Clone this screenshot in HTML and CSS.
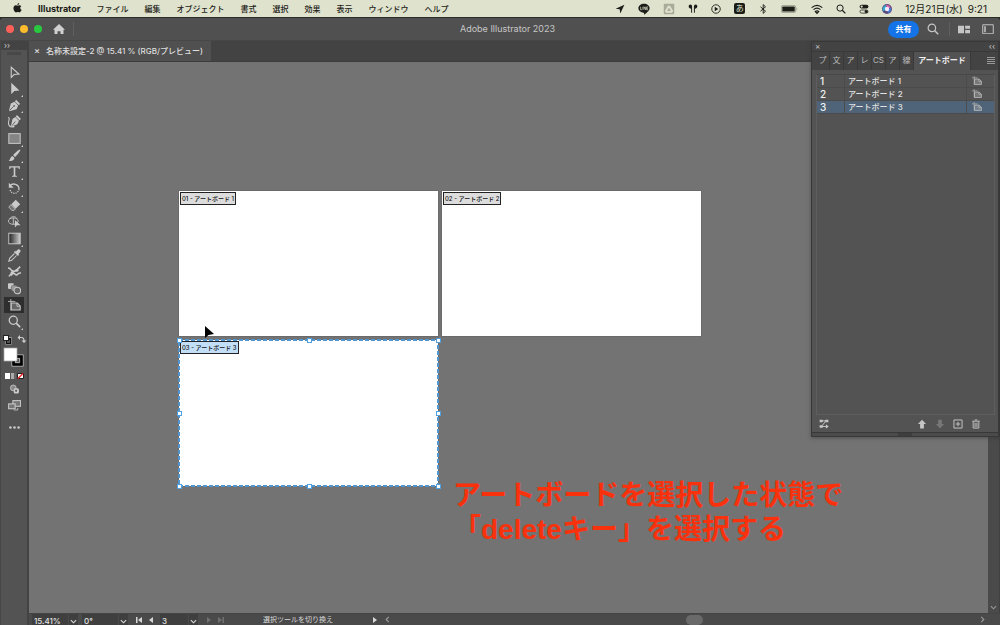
FILE: index.html
```html
<!DOCTYPE html>
<html lang="ja">
<head>
<meta charset="utf-8">
<meta name="viewport" content="width=device-width, initial-scale=1">
<title>Adobe Illustrator 2023</title>
<link rel="stylesheet" href="styles.css">
</head>
<body>
<svg class="defs" aria-hidden="true">
  <symbol id="artboard" viewBox="0 0 16 16"><path d="M3.500 0v14M0 3h9" fill="none" stroke="currentColor"/><path d="M4 5h7.500l3.500 3.500V13.500H4z" fill="currentColor" fill-opacity=".35" stroke="currentColor" stroke-width="1.300"/><path d="M11 5v4h4" fill="none" stroke="currentColor"/></symbol>
  <symbol id="chev" viewBox="0 0 8 8"><path d="M1 2.500l3 3 3-3" fill="none" stroke="currentColor" stroke-width="1.300"/></symbol>
  <symbol id="search" viewBox="0 0 16 16"><circle cx="6.500" cy="6.500" r="5" fill="none" stroke="currentColor" stroke-width="1.600"/><path d="M10 10l5 5" stroke="currentColor" stroke-width="2"/></symbol>
</svg>

<header class="menubar">
  <nav class="menus">
    <button class="menu apple" aria-label="Apple"><svg viewBox="0 0 16 18"><path d="M11 0c.2 2-1.600 4-3.300 4C7.500 2.200 9.200.3 11 0zM8 5c.8 0 2-1 3.600-1 1.200 0 2.400.6 3.100 1.700-2.800 1.600-2.300 5.400.5 6.500-.7 2-2.200 4.600-3.800 4.600-1.200 0-1.600-.7-3-.7s-1.900.7-3 .7C3.200 16.800.8 13 .8 9.500.8 6 3 4.200 5.100 4.200 6.500 4.200 7.300 5 8 5z" fill="currentColor"/></svg></button>
    <button class="menu appname">Illustrator</button>
    <button class="menu">ファイル</button>
    <button class="menu">編集</button>
    <button class="menu">オブジェクト</button>
    <button class="menu">書式</button>
    <button class="menu">選択</button>
    <button class="menu">効果</button>
    <button class="menu">表示</button>
    <button class="menu">ウィンドウ</button>
    <button class="menu">ヘルプ</button>
  </nav>
  <div class="tray">
    <svg viewBox="0 0 16 16"><path d="M15 1L1 7.500l6.500 1L8.500 15z" fill="currentColor"/></svg>
    <svg class="big" viewBox="0 0 16 16"><path d="M8 1c4 0 7.500 2.500 7.500 6 0 3-3.500 6-7.500 8.500.3-1.500 0-2.400-.5-2.500C3.500 12.600.5 10.200.5 7c0-3.500 3.500-6 7.500-6z" fill="currentColor"/><path d="M3.500 5v4h1.800M6.500 5v4M8 9V5l2.200 4V5M13.500 5.200h-2V9h2M11.500 7h1.800" fill="none" stroke="#dfe1cc" stroke-width=".9"/></svg>
    <svg class="big" viewBox="0 0 16 16"><rect x="1" y="1" width="14" height="14" rx="1" fill="#a9ab9a"/><path d="M6.500 3.500h3l4 7-1.500 2.500H4L2.500 10.500zM8 6l-2.500 4.500h5z" fill="#dfe1cc" fill-rule="evenodd"/></svg>
    <svg viewBox="0 0 16 16"><path d="M1 3.500a2.500 2.500 0 0 1 5.500 0V14H5V7.500C3 7 1 6 1 3.500zM15 3.500a2.500 2.500 0 0 0-5.500 0V14H11V7.500c2-.5 4-1.500 4-4z" fill="currentColor"/></svg>
    <svg viewBox="0 0 16 16"><circle cx="8" cy="8" r="6.800" fill="none" stroke="currentColor" stroke-width="1.400"/><path d="M6 4.500v7L11.500 8z" fill="currentColor"/></svg>
    <span class="ime">あ</span>
    <svg viewBox="0 0 16 16"><path d="M4 4.500l8 7L8.300 15V1L12 4.500l-8 7" fill="none" stroke="currentColor" stroke-width="1.500"/></svg>
    <svg class="battery" viewBox="0 0 26 12"><rect x=".5" y=".5" width="22" height="11" rx="3" fill="none" stroke="currentColor" stroke-opacity=".5"/><rect x="2" y="2" width="19" height="8" rx="1.500" fill="currentColor"/><path d="M24 4q2 2 0 4z" fill="currentColor" fill-opacity=".5"/></svg>
    <svg class="big" viewBox="0 0 18 16"><path d="M1 6q8-7 16 0M3.800 9q5.200-4.500 10.400 0M6.500 11.800q2.500-2 5 0L9 14.500z" fill="none" stroke="currentColor" stroke-width="1.800"/></svg>
    <svg viewBox="0 0 16 16"><use href="#search"/></svg>
    <svg viewBox="0 0 16 16"><rect x="1" y="1" width="14" height="6" rx="3" fill="currentColor"/><circle cx="4.300" cy="4" r="1.800" fill="#dfe1cc"/><rect x="1.600" y="9.600" width="12.800" height="5" rx="2.500" fill="none" stroke="currentColor" stroke-width="1.200"/><circle cx="11.500" cy="12" r="2.500" fill="currentColor"/></svg>
    <svg viewBox="0 0 16 16"><circle cx="8" cy="8" r="8" fill="#5a4a80"/><path d="M2 12A7 7 0 0 1 6 1.500L7 7z" fill="#35a9c9"/><path d="M6 1.500a7 7 0 0 1 8 4L9 7z" fill="#d861a8"/><path d="M14.500 6a7 7 0 0 1-5 8.500L9 9z" fill="#4a7de0"/><circle cx="8" cy="8" r="3.500" fill="#eef"/></svg>
    <time class="clock">12月21日(水)&ensp;9:21</time>
  </div>
</header>

<div class="app">
  <header class="appbar">
    <div class="side">
      <button class="light red" aria-label="閉じる"></button>
      <button class="light yellow" aria-label="しまう"></button>
      <button class="light green" aria-label="拡大"></button>
      <button class="home" aria-label="ホーム"><svg viewBox="0 0 16 14"><path d="M8 0l8 7.500h-2V14h-4V9.500H6V14H2V7.500H0z" fill="currentColor"/></svg></button>
      <i class="rule"></i>
    </div>
    <h1 class="title">Adobe Illustrator 2023</h1>
    <div class="side end">
      <button class="share">共有</button>
      <button class="iconbtn" aria-label="検索"><svg viewBox="0 0 16 16"><use href="#search"/></svg></button>
      <i class="rule"></i>
      <button class="iconbtn" aria-label="レイアウト"><svg viewBox="0 0 16 12"><path d="M0 1h8v10H0zM9.500 1H16v4H9.500zM9.500 6.500H16V11H9.500z" fill="currentColor"/></svg></button>
      <button class="iconbtn" aria-label="ワークスペース"><svg viewBox="0 0 16 14"><path d="M1 1h14v12H1z" fill="none" stroke="currentColor" stroke-width="1.300"/><path d="M3 3h2v8H3z" fill="currentColor"/></svg></button>
    </div>
  </header>

  <div class="body">
    <aside class="toolbar">
      <button class="expand" aria-label="展開">››</button>
      <i class="grip"></i>
      <div class="tools">
        <button class="tool" aria-label="選択"><svg viewBox="0 0 16 16"><path d="M4 1.500v12.500l3.500-3.500 6-.5z" fill="none" stroke="currentColor" stroke-width="1.400"/></svg></button>
        <button class="tool more" aria-label="ダイレクト選択"><svg viewBox="0 0 16 16"><path d="M4 1v14l3.800-4 6.200-.5z" fill="currentColor"/></svg></button>
        <button class="tool more" aria-label="ペン"><svg viewBox="0 0 16 16"><path d="M10 1l5 5-2 1.500L8.500 3zM8 3.500L12.500 8l-2 4.500L2 15l-.8-.8L3.500 5.500z" fill="currentColor"/><path d="M2 14l5-5" stroke="#535353"/><circle cx="7.500" cy="8.500" r="1" fill="#535353"/></svg></button>
        <button class="tool" aria-label="曲線"><svg viewBox="0 0 16 16"><path d="M11 0l5 5-2 1.500L9.500 2zM9 2.500L13.500 7l-2 4.500L4.500 14l-.8-.8L5.500 5z" fill="currentColor"/><path d="M0 3c4 1-1 5 1 9 1 3 4 3 7 2" fill="none" stroke="currentColor" stroke-width="1.300"/><path d="M5 13l4-5" stroke="#535353"/></svg></button>
        <button class="tool more" aria-label="長方形"><svg viewBox="0 0 16 16"><rect x="1" y="2" width="14" height="12" fill="#858585" stroke="currentColor" stroke-width="1.200"/></svg></button>
        <button class="tool more" aria-label="ブラシ"><svg viewBox="0 0 16 16"><path d="M15 .8c1 1-4.500 7.500-6.500 9L6.300 7.700C8 5.500 14 0 15 .8zM5.500 8.500L8 11c-.5 3-4 4-7.500 3.800C3 13.500 2.500 9.500 5.500 8.500z" fill="currentColor"/></svg></button>
        <button class="tool more" aria-label="文字"><svg viewBox="0 0 16 16"><path d="M1.500 1.500h13V5h-1.200l-.6-1.800H9V13l2 .5v1H5v-1l2-.5V3.200H3.300L2.700 5H1.500z" fill="currentColor"/></svg></button>
        <button class="tool more" aria-label="回転"><svg viewBox="0 0 16 16"><path d="M2.500 4.500C6 .5 13.500 3 13.500 8.500" fill="none" stroke="currentColor" stroke-width="1.600"/><path d="M13.500 8.500C13 15 4 16 2.500 9.500" fill="none" stroke="currentColor" stroke-width="1.500" stroke-dasharray="1.500 1.300"/><path d="M1 1v6h6z" fill="currentColor"/></svg></button>
        <button class="tool more" aria-label="消しゴム"><svg viewBox="0 0 16 16"><path d="M9.500 1L15 6.500 9.300 12 4 6.500z" fill="currentColor"/><path d="M3.500 7L9 12.500 7.500 14H4.800L1 10z" fill="#737373" stroke="currentColor"/></svg></button>
        <button class="tool" aria-label="シェイプ形成"><svg viewBox="0 0 16 16"><ellipse cx="6.500" cy="7.500" rx="6" ry="4" fill="none" stroke="currentColor" stroke-width="1.100"/><path d="M2 5c2-4 8-4 9 0M6.500 3.500v8" fill="none" stroke="currentColor" stroke-width="1.100"/><path d="M8.500 6v9.500l2.500-3h4.500z" fill="currentColor"/></svg></button>
        <button class="tool more" aria-label="グラデーション"><svg viewBox="0 0 16 16"><defs><linearGradient id="g"><stop stop-color="#222"/><stop offset="1" stop-color="#ccc"/></linearGradient></defs><rect x="1" y="1.500" width="14" height="13" fill="url(#g)" stroke="currentColor" stroke-width="1.200"/></svg></button>
        <button class="tool" aria-label="スポイト"><svg viewBox="0 0 16 16"><path d="M9.500 3L12 .8c2-1.300 4.500 1 3 3L13 6.300l.8.900-1.500 1.500-5-5L8.700 2.300z" fill="currentColor"/><path d="M8 5.500l-6 6L1 15l3.500-1 6-6" fill="none" stroke="currentColor" stroke-width="1.300"/></svg></button>
        <button class="tool" aria-label="パペットワープ"><svg viewBox="0 0 16 16"><path d="M0 4c3-1 3 2 5 3s4 1 6-1l4-4M1 14c2-1 2-4 5-4s3 3 5 2 2-3 5-2M7 7L4 13" fill="none" stroke="currentColor" stroke-width="1.900"/><circle cx="5" cy="9.500" r="1.900" fill="currentColor"/><circle cx="11" cy="6.500" r="1.900" fill="currentColor"/></svg></button>
        <button class="tool" aria-label="ブレンド"><svg viewBox="0 0 16 16"><rect x="0" y="1.500" width="7" height="7" rx="1" fill="currentColor"/><rect x="4" y="4" width="7.500" height="7.500" rx="2.500" fill="#999" stroke="#535353" stroke-width=".6"/><circle cx="11.500" cy="10.500" r="4" fill="#666" stroke="currentColor" stroke-width="1.300"/></svg></button>
        <button class="tool current" aria-label="アートボード" aria-pressed="true"><svg viewBox="0 0 16 16"><use href="#artboard"/></svg></button>
        <button class="tool more" aria-label="ズーム"><svg viewBox="0 0 16 16"><use href="#search"/></svg></button>
      </div>
      <svg class="colors" viewBox="0 0 26 48" role="img" aria-label="塗りと線">
        <path d="M5 6h5v5H5z" fill="none" stroke="#111" stroke-width="2"/><path d="M4.500 4.500h6v7h-6z" fill="none" stroke="#ccc" stroke-width=".6"/><rect x="2.500" y="2.500" width="5" height="5" fill="#fff" stroke="#222"/>
        <path d="M18 4.500h2.500q2.500 0 2.500 3.500" fill="none" stroke="#ccc" stroke-width="1.200"/><path d="M19 2v5l-2.500-2.500zM20.500 7.500h5L23 10z" fill="#ccc"/>
        <rect x="11" y="22" width="11" height="11" fill="#535353" stroke="#ccc"/><rect x="12.500" y="23.500" width="8" height="8" fill="none" stroke="#000" stroke-width="2.500"/><rect x="14.500" y="25.500" width="4" height="4" fill="#535353" stroke="#ccc" stroke-width=".7"/>
        <rect x="3" y="15" width="13" height="13" fill="#fff" stroke="#aaa" stroke-width=".7"/>
        <path d="M4 40h5v6H4z" fill="#fff"/><path d="M10 40h3v6h-3z" fill="#aaa"/><path d="M13 40h2v6h-2z" fill="#666"/><path d="M16.500 40.500h6v5h-6z" fill="#fff" stroke="#222"/><path d="M17 45.500l5-5" stroke="#e22" stroke-width="1.500"/>
      </svg>
      <button class="tool" aria-label="描画モード"><svg viewBox="0 0 16 16"><circle cx="6.500" cy="6" r="3.500" fill="#888" stroke="currentColor"/><rect x="7" y="6.500" width="6.500" height="6.500" rx="2" fill="currentColor"/><circle cx="10" cy="9.500" r="1.300" fill="#535353"/></svg></button>
      <button class="tool" aria-label="スクリーンモード"><svg viewBox="0 0 16 16"><rect x="6" y="2" width="9.500" height="7" fill="#777" stroke="currentColor" stroke-width="1.300"/><rect x=".8" y="6" width="8" height="6" fill="#777" stroke="currentColor" stroke-width="1.300"/><path d="M7 13.500h5V11" fill="none" stroke="currentColor"/></svg></button>
      <button class="tool dots" aria-label="ツールバーを編集"><svg viewBox="0 0 16 16"><g fill="currentColor"><circle cx="3" cy="8" r="1.600"/><circle cx="8" cy="8" r="1.600"/><circle cx="13" cy="8" r="1.600"/></g></svg></button>
    </aside>

    <main class="workspace">
      <div class="doctabs">
        <div class="doctab"><button class="close" aria-label="閉じる">×</button><span>名称未設定-2 @ 15.41 % (RGB/プレビュー)</span></div>
      </div>
      <div class="stage">
        <div class="canvas">
          <section class="board one"><span class="tag">01 - アートボード 1</span></section>
          <section class="board two"><span class="tag">02 - アートボード 2</span></section>
          <section class="board three"><span class="tag">03 - アートボード 3</span>
            <svg class="selection"><rect width="100%" height="100%"/></svg>
            <i class="handle nw"></i><i class="handle n"></i><i class="handle ne"></i><i class="handle w"></i><i class="handle e"></i><i class="handle sw"></i><i class="handle s"></i><i class="handle se"></i>
          </section>
          <svg class="pointer" viewBox="0 0 10 14"><path d="M1 0v12l3.500-3L10 8z" fill="#000"/></svg>
          <p class="note">アートボードを選択した状態で<br>「deleteキー」を選択する</p>
        </div>
        <div class="vscroll"><svg viewBox="0 0 8 8"><use href="#chev"/></svg></div>
      </div>
      <footer class="status">
        <input class="field zoom" aria-label="ズーム" value="15.41%"><button class="drop" aria-label="ズーム一覧"><svg viewBox="0 0 8 8"><use href="#chev"/></svg></button>
        <input class="field angle" aria-label="回転" value="0°"><button class="drop" aria-label="角度一覧"><svg viewBox="0 0 8 8"><use href="#chev"/></svg></button>
        <button class="step" aria-label="最初"><svg viewBox="0 0 8 8"><path d="M1 1h1.500v6H1zM7 1v6L3 4z" fill="currentColor"/></svg></button>
        <button class="step" aria-label="前へ"><svg viewBox="0 0 8 8"><path d="M6 1v6L2 4z" fill="currentColor"/></svg></button>
        <input class="field page" aria-label="アートボード番号" value="3"><button class="drop" aria-label="アートボード一覧"><svg viewBox="0 0 8 8"><use href="#chev"/></svg></button>
        <button class="step" disabled aria-label="次へ"><svg viewBox="0 0 8 8"><path d="M2 1v6l4-3z" fill="currentColor"/></svg></button>
        <button class="step" disabled aria-label="最後"><svg viewBox="0 0 8 8"><path d="M5.500 1H7v6H5.500zM1 1v6l4-3z" fill="currentColor"/></svg></button>
        <span class="hint">選択ツールを切り換え</span>
        <button class="step" aria-label="表示メニュー"><svg viewBox="0 0 8 8"><path d="M2 1v6l4-3z" fill="currentColor"/></svg></button>
        <div class="hscroll"><svg class="left" viewBox="0 0 8 8"><use href="#chev"/></svg><i class="thumb"></i><svg class="right" viewBox="0 0 8 8"><use href="#chev"/></svg></div>
      </footer>
    </main>

    <aside class="panel">
      <div class="panelhead"><button aria-label="パネルを閉じる">×</button><button aria-label="折りたたむ">‹‹</button></div>
      <div class="paneltabs">
        <button class="ptab">プ</button><button class="ptab">文</button><button class="ptab">ア</button><button class="ptab">レ</button><button class="ptab">CS</button><button class="ptab">ア</button><button class="ptab">線</button><button class="ptab active">アートボード</button>
        <button class="pmenu" aria-label="パネルメニュー"><svg viewBox="0 0 8 8"><path d="M0 1.500h8M0 3.500h8M0 5.500h8M0 7.500h8" stroke="currentColor" stroke-width=".7"/></svg></button>
      </div>
      <div class="list">
        <table class="boards">
          <tr><td class="num">1</td><td class="name">アートボード 1</td><td class="ico"><svg viewBox="0 0 16 16"><use href="#artboard"/></svg></td></tr>
          <tr><td class="num">2</td><td class="name">アートボード 2</td><td class="ico"><svg viewBox="0 0 16 16"><use href="#artboard"/></svg></td></tr>
          <tr class="selected"><td class="num">3</td><td class="name">アートボード 3</td><td class="ico"><svg viewBox="0 0 16 16"><use href="#artboard"/></svg></td></tr>
        </table>
      </div>
      <div class="panelfoot">
        <button class="arrange" aria-label="再配置"><svg viewBox="0 0 16 16"><path d="M1 1h5v4H1zM10 1h5v4h-5zM1 10h5v4H1z" fill="currentColor"/><path d="M5 3h6L4 12h8" fill="none" stroke="currentColor" stroke-width="1.500"/><path d="M11 8.500v7l4.500-3.500z" fill="currentColor"/></svg></button>
        <button aria-label="上へ"><svg viewBox="0 0 16 16"><path d="M8 1l6.500 7H11v7H5V8H1.500z" fill="currentColor"/></svg></button>
        <button disabled aria-label="下へ"><svg viewBox="0 0 16 16"><path d="M8 15l6.500-7H11V1H5v7H1.500z" fill="currentColor"/></svg></button>
        <button aria-label="新規"><svg viewBox="0 0 16 16"><path d="M1.500 1.500h13v13h-13zM8 4.500v7M4.500 8h7" fill="none" stroke="currentColor" stroke-width="1.500"/></svg></button>
        <button aria-label="削除"><svg viewBox="0 0 16 16"><path d="M6 1.500h4M2 3.500h12M3.500 4v10.500h9V4M6.500 6v7M9.500 6v7" fill="none" stroke="currentColor" stroke-width="1.500"/></svg></button>
      </div>
      <div class="resize"><i></i></div>
    </aside>
  </div>
</div>
</body>
</html>
```

FILE: styles.css
```css
* { box-sizing: border-box; }
body {
  margin: 0;
  height: 100vh;
  display: flex;
  flex-direction: column;
  overflow: hidden;
  background: #2c2d29;
  color: #d8d8d8;
  font: 8px/12px Inter, "Noto Sans CJK JP", sans-serif;
}
button, input { font: inherit; color: inherit; background: none; border: 0; padding: 0; margin: 0; }
svg { display: block; }
.defs { position: absolute; width: 0; height: 0; }

.menubar {
  flex: none;
  height: 17px;
  display: flex;
  align-items: center;
  justify-content: space-between;
  padding: 0 13px;
  background: #dfe2cd;
  color: #1c1c18;
}
.menus { display: flex; align-items: center; gap: 16px; white-space: nowrap; font-weight: 500; }
.apple { width: 9px; }
.appname { font-size: 9px; font-weight: 700; }
.tray { display: flex; align-items: center; gap: 13px; }
.tray svg { width: 10px; height: 10px; }
.tray .big { width: 12px; height: 12px; }
.tray .battery { width: 17px; height: 8px; }
.ime { width: 11px; height: 11px; border-radius: 2px; background: #1c1c18; color: #dfe2cd; line-height: 11px; text-align: center; }
.clock { font-size: 10px; white-space: nowrap; }

.app { flex: 1; min-height: 0; display: flex; flex-direction: column; margin-top: 1px; border-radius: 4px 4px 0 0; overflow: hidden; background: #535353; }
.appbar { flex: none; height: 23px; display: flex; align-items: center; padding: 0 6px; background: #505050; border-bottom: 1px solid #474747; }
.side { flex: 1; display: flex; align-items: center; gap: 6px; }
.side.end { justify-content: flex-end; gap: 8px; }
.light { width: 8px; height: 8px; border-radius: 50%; }
.red { background: #fe5f57; }
.yellow { background: #febc2e; }
.green { background: #28c840; }
.home { width: 12px; margin-left: 5px; color: #d0d0d0; }
.rule { width: 1px; height: 14px; background: #606060; margin-left: 2px; }
.title { margin: 0 0 0 15px; font-size: 9px; line-height: 12px; font-weight: 400; color: #c6c6c6; }
.share { width: 31px; height: 17px; border-radius: 9px; background: #1473e6; color: #fff; font-weight: 700; }
.iconbtn { width: 12px; color: #c6c6c6; }
.iconbtn + .iconbtn { margin-left: 4px; }

.body { position: relative; flex: 1; min-height: 0; display: flex; }
.toolbar { flex: none; width: 29px; display: flex; flex-direction: column; align-items: center; background: #535353; border-left: 1px solid #474747; border-right: 2px solid #434343; color: #cacaca; }
.expand { align-self: stretch; flex: none; height: 9px; padding-left: 3px; background: #434343; text-align: left; line-height: 7px; }
.grip { flex: none; width: 14px; height: 3px; margin: 2px 0; background: #484848; }
.tools { flex: none; height: 266px; margin-top: 7px; display: flex; flex-direction: column; justify-content: space-between; }
.tool { position: relative; flex: none; width: 20px; height: 16px; display: grid; place-items: center; }
.tool svg { width: 13px; height: 13px; }
.tool.current { background: #2e2e2e; }
.more::after { content: ""; position: absolute; right: 1px; bottom: 0; border: 1px solid transparent; border-right-color: #ccc; border-bottom-color: #ccc; }
.colors { flex: none; width: 26px; height: 48px; margin: 3px 0 0; }
.dots { margin-top: 6px; }

.workspace { flex: 1; min-width: 0; display: flex; flex-direction: column; }
.doctabs { flex: none; height: 21px; display: flex; background: #434343; border-bottom: 1px solid #3c3c3c; }
.doctab { display: flex; align-items: center; gap: 6px; padding: 0 8px 0 5px; background: #505050; color: #dedede; white-space: nowrap; font-weight: 500; }
.close { width: 6px; font-size: 9px; }
.stage { flex: 1; min-height: 0; display: flex; }
.canvas { position: relative; flex: 1; overflow: hidden; background: #737373; }
.vscroll { flex: none; width: 12px; display: flex; align-items: flex-end; justify-content: center; padding-bottom: 2px; background: #4a4a4a; border-right: 1px solid #404040; color: #999; }
.vscroll svg, .hscroll svg { width: 7px; height: 7px; }

.board { position: absolute; width: 259px; height: 145px; background: #fff; box-shadow: 0 0 1px #444; }
.one { left: 150px; top: 129px; }
.two { left: 413px; top: 129px; }
.three { left: 150px; top: 278px; height: 146px; }
.tag { position: absolute; left: 1px; top: 1px; padding: 0 1px; border: 1px solid #222; background: #dcdcdc; color: #111; font-size: 6px; line-height: 11px; font-weight: 500; white-space: nowrap; }
.three .tag { background: #c3def7; }
.selection { position: absolute; inset: 0; width: 100%; height: 100%; overflow: visible; }
.selection rect { fill: none; stroke: #5294cc; stroke-width: 2; stroke-dasharray: 4 2; }
.handle { position: absolute; width: 5px; height: 5px; margin: -2px; background: #fff; outline: 1px solid #4fa0e0; outline-offset: -1px; }
.nw, .w, .sw { left: 0; }
.n, .s { left: 50%; }
.ne, .e, .se { left: 100%; }
.nw, .n, .ne { top: 0; }
.w, .e { top: 50%; }
.sw, .s, .se { top: 100%; }
.pointer { position: absolute; left: 175px; top: 264px; width: 10px; height: 14px; }
.note { position: absolute; left: 424px; top: 417px; margin: 0; color: #f9310c; font: 700 28px/34px "Liberation Sans", "Noto Sans CJK JP", sans-serif; white-space: nowrap; }

.status { flex: none; height: 12px; display: flex; align-items: center; padding-left: 3px; background: #4a4a4a; overflow: hidden; border-top: 1px solid #444; }
.field { height: 14px; padding: 3px 0 0 2px; background: #3f3f3f; color: #e4e4e4; flex: none; font-weight: 500; }
.zoom { width: 36px; }
.angle { width: 36px; margin-left: 4px; }
.page { width: 28px; margin-left: 3px; }
.drop { flex: none; width: 10px; height: 14px; padding: 4px 1px 0; background: #3f3f3f; border-left: 1px solid #4a4a4a; }
.drop svg { width: 7px; height: 7px; }
.step { flex: none; width: 12px; padding: 2px; }
.drop + .step { margin-left: 5px; }
.step:disabled { color: #707070; }
.hint { width: 142px; text-align: center; font-size: 7px; }
.hscroll { flex: 1; display: flex; align-items: center; padding: 0 14px 0 3px; color: #999; }
.left { transform: rotate(90deg); }
.right { transform: rotate(-90deg); margin-left: auto; }
.thumb { width: 17px; height: 10px; border-radius: 5px; background: #6a6a6a; margin-left: 49%; }

.panel { position: absolute; right: 0; top: 0; width: 189px; height: 396px; display: flex; flex-direction: column; background: #535353; border: 1px solid #383838; border-right-width: 2px; box-shadow: 0 1px 4px #3338; }
.panelhead { flex: none; height: 9px; display: flex; justify-content: space-between; padding: 0 3px; background: #434343; }
.panelhead button { height: 8px; line-height: 8px; color: #c8c8c8; }
.paneltabs { flex: none; height: 19px; display: flex; background: #434343; border-top: 1px solid #3a3a3a; white-space: nowrap; color: #bdbdbd; }
.ptab { flex: none; width: 14px; padding-bottom: 3px; overflow: hidden; border-right: 1px solid #3a3a3a; }
.ptab:first-child { margin-left: 4px; }
.ptab.active { width: 57px; background: #535353; color: #eee; font-weight: 700; }
.pmenu { width: 8px; margin: 0 3px 0 auto; padding-bottom: 2px; }
.list { flex: 1; margin: 4px 3px 0 4px; border: 1px solid #5e5e5e; border-top-color: #484848; }
.boards { width: 100%; border-spacing: 0; }
.boards tr { height: 13px; }
.boards td { padding: 0 0 0 3px; line-height: 12px; border-bottom: 1px solid #4b4b4b; }
.boards .selected { background: #4f6478; }
.boards .num { width: 28px; font-size: 10px; font-weight: 500; color: #f2f2f2; border-right: 1px solid #4b4b4b; }
.boards .name { color: #e2e2e2; font-weight: 500; }
.boards .ico { width: 28px; padding-left: 5px; border-left: 1px solid #4b4b4b; color: #bbb; }
.ico svg { width: 10px; height: 10px; }
.panelfoot { flex: none; height: 17px; display: flex; align-items: center; gap: 8px; padding: 0 17px 0 7px; color: #c6c6c6; }
.panelfoot svg { width: 10px; height: 10px; }
.panelfoot .arrange { margin-right: auto; }
.panelfoot button:disabled { color: #777; }
.resize { flex: none; height: 4px; background: #4b4b4b; border-top: 1px solid #383838; }
.resize i { display: block; width: 14px; height: 3px; margin: 0 auto; background: #3e3e3e; }
```
